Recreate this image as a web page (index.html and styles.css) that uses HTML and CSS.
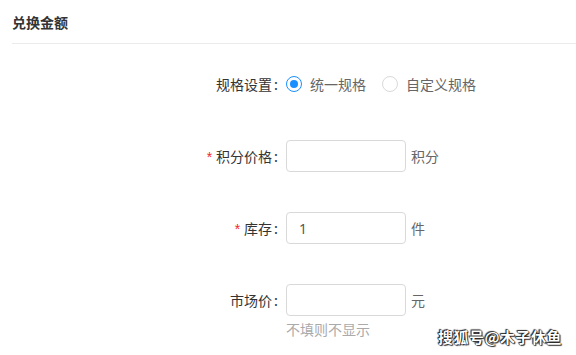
FILE: index.html
```html
<!DOCTYPE html>
<html lang="zh">
<head>
<meta charset="utf-8">
<link rel="stylesheet" href="styles.css">
</head>
<body>
<div class="page">
  <div class="header">
    <h2 class="title">兑换金额</h2>
  </div>
  <div class="form">
    <div class="row">
      <label class="label">规格设置<span class="colon">:</span></label>
      <div class="control radios">
        <span class="radio checked"><span class="dot"></span></span>
        <span class="radio-text">统一规格</span>
        <span class="radio"></span>
        <span class="radio-text">自定义规格</span>
      </div>
    </div>
    <div class="row">
      <label class="label"><span class="req">*</span>积分价格<span class="colon">:</span></label>
      <div class="control">
        <input class="input" type="text" value="">
        <span class="unit">积分</span>
      </div>
    </div>
    <div class="row">
      <label class="label"><span class="req">*</span>库存<span class="colon">:</span></label>
      <div class="control">
        <input class="input" type="text" value="1">
        <span class="unit">件</span>
      </div>
    </div>
    <div class="row with-hint">
      <label class="label">市场价<span class="colon">:</span></label>
      <div class="control-col">
        <div class="control">
          <input class="input" type="text" value="">
          <span class="unit">元</span>
        </div>
        <div class="hint">不填则不显示</div>
      </div>
    </div>
  </div>
  <div class="watermark">搜狐号@木子休鱼</div>
</div>
</body>
</html>
```

FILE: styles.css
```css
* { box-sizing: border-box; }
html, body { margin: 0; padding: 0; background: #fff; }
body {
  font-family: "Noto Sans CJK SC", "Noto Sans", sans-serif;
  color: #333;
  width: 576px;
  height: 355px;
  overflow: hidden;
}
.page { position: relative; width: 576px; height: 355px; }
.header {
  margin-left: 12px;
  height: 44px;
  border-bottom: 1px solid #ebebeb;
  display: flex;
  align-items: center;
}
.title {
  margin: 0;
  font-size: 14px;
  font-weight: bold;
  color: #333;
  line-height: 20px;
}
.form {
  padding-top: 24px;
  display: flex;
  flex-direction: column;
  gap: 40px;
}
.row {
  display: flex;
  align-items: flex-start;
}
.label {
  width: 286px;
  padding-right: 8px;
  height: 32px;
  line-height: 32px;
  text-align: right;
  font-size: 14px;
  color: #333;
}
.colon { margin-left: 2px; }
.req {
  color: #f5222d;
  margin-right: 4px;
  font-family: "Liberation Sans", sans-serif;
}
.control {
  display: flex;
  align-items: center;
  height: 32px;
}
.control-col { display: flex; flex-direction: column; }
.radio {
  width: 16px;
  height: 16px;
  border: 1px solid #d9d9d9;
  border-radius: 50%;
  display: flex;
  align-items: center;
  justify-content: center;
}
.radio.checked { border: 1.5px solid #1890ff; }
.dot {
  width: 8px;
  height: 8px;
  border-radius: 50%;
  background: #1890ff;
}
.radio-text {
  font-size: 14px;
  color: #666;
  margin-left: 8px;
  margin-right: 16px;
}
.input {
  width: 120px;
  height: 32px;
  border: 1px solid #d9d9d9;
  border-radius: 4px;
  padding: 0 12px;
  font-family: "Noto Sans", sans-serif;
  font-size: 14px;
  color: #555;
  outline: none;
  margin: 0;
}
.unit {
  margin-left: 5px;
  font-size: 14px;
  color: #666;
}
.hint {
  margin-top: 3px;
  font-size: 14px;
  line-height: 20px;
  color: #aaa;
}
.watermark {
  position: absolute;
  right: 14px;
  bottom: 8px;
  font-size: 15px;
  font-weight: bold;
  color: #fff;
  text-shadow: 0 0 1px #000, 0 0 1px #000, 1px 1px 1px #333, -1px -1px 1px #333;
  letter-spacing: 0.5px;
}
```
